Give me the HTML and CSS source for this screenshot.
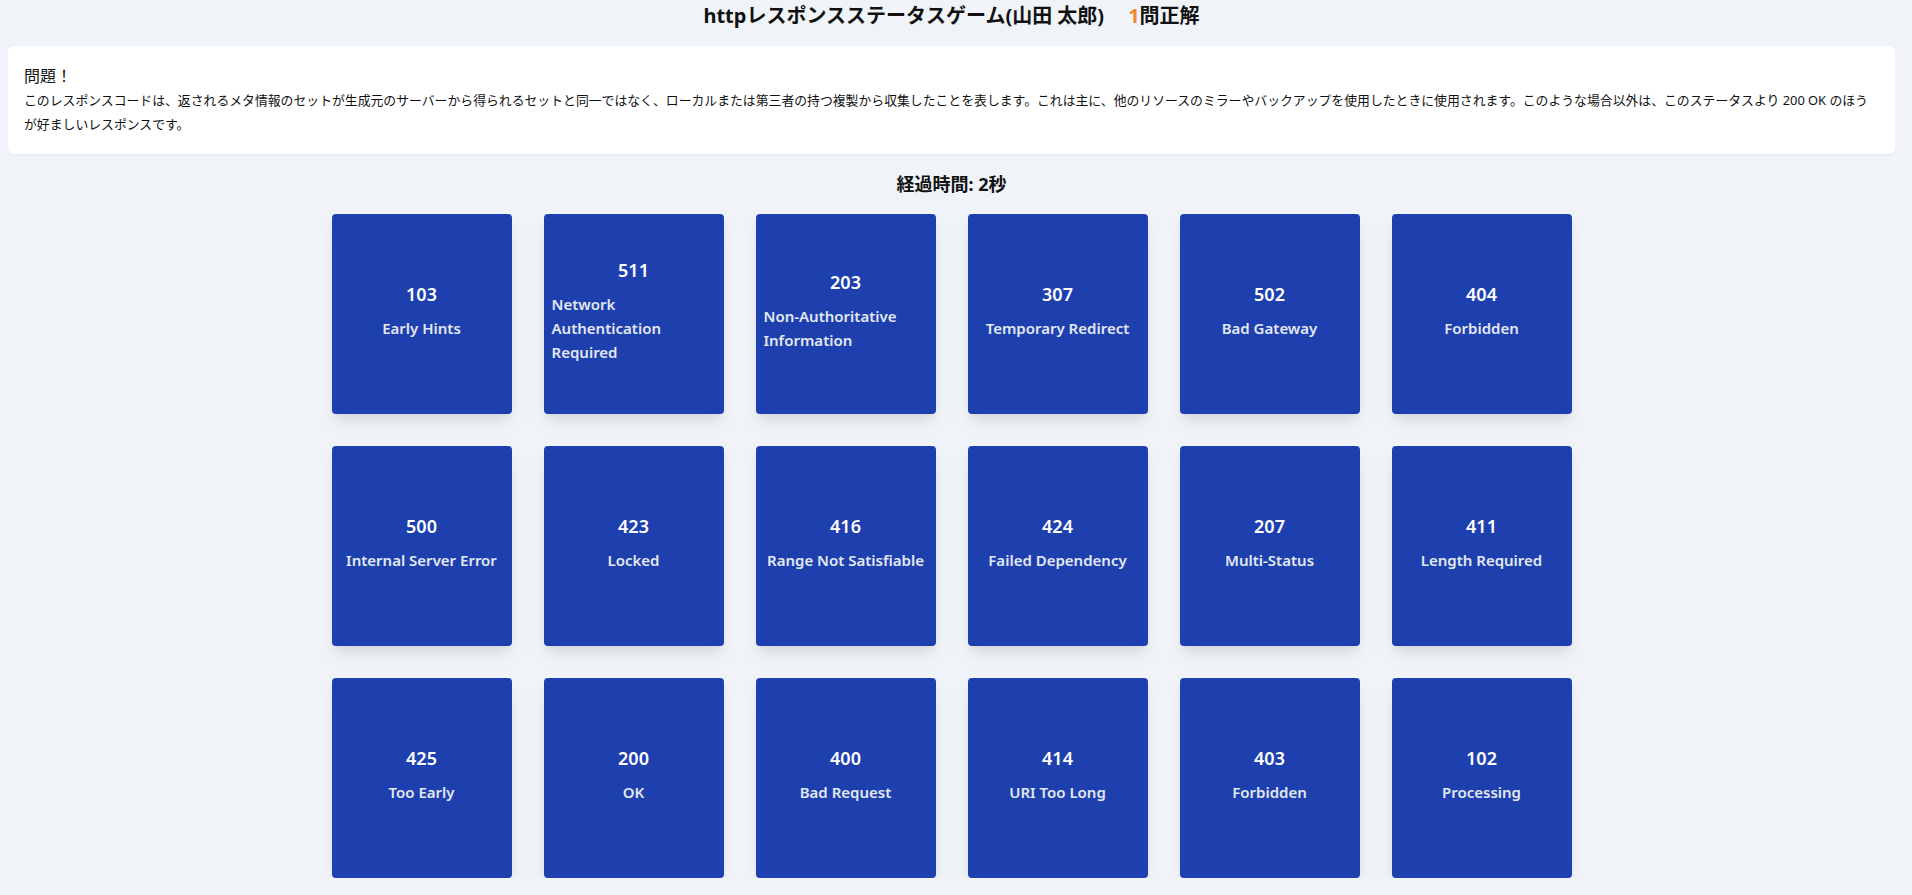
FILE: index.html
```html
<!DOCTYPE html>
<html lang="ja">
    <head>
        <meta charset="UTF-8">
        <title>httpレスポンスステータスゲーム</title>
        <link rel="stylesheet" href="styles.css">
    </head>
    <body>
        <h1 class="title">httpレスポンスステータスゲーム(山田 太郎)<span class="score"><span class="count">1</span>問正解</span></h1>

        <div class="question">
            <p class="question-head">問題！</p>
            <p class="question-text">このレスポンスコードは、返されるメタ情報のセットが生成元のサーバーから得られるセットと同一ではなく、ローカルまたは第三者の持つ複製から収集したことを表します。これは主に、他のリソースのミラーやバックアップを使用したときに使用されます。このような場合以外は、このステータスより 200 OK のほうが好ましいレスポンスです。</p>
        </div>

        <p class="timer">経過時間: 2秒</p>

        <div class="cards">
            <div class="card"><p class="code">103</p><p class="name">Early Hints</p></div>
            <div class="card"><p class="code">511</p><p class="name">Network Authentication Required</p></div>
            <div class="card"><p class="code">203</p><p class="name">Non-Authoritative Information</p></div>
            <div class="card"><p class="code">307</p><p class="name">Temporary Redirect</p></div>
            <div class="card"><p class="code">502</p><p class="name">Bad Gateway</p></div>
            <div class="card"><p class="code">404</p><p class="name">Forbidden</p></div>

            <div class="card"><p class="code">500</p><p class="name">Internal Server Error</p></div>
            <div class="card"><p class="code">423</p><p class="name">Locked</p></div>
            <div class="card"><p class="code">416</p><p class="name">Range Not Satisfiable</p></div>
            <div class="card"><p class="code">424</p><p class="name">Failed Dependency</p></div>
            <div class="card"><p class="code">207</p><p class="name">Multi-Status</p></div>
            <div class="card"><p class="code">411</p><p class="name">Length Required</p></div>

            <div class="card"><p class="code">425</p><p class="name">Too Early</p></div>
            <div class="card"><p class="code">200</p><p class="name">OK</p></div>
            <div class="card"><p class="code">400</p><p class="name">Bad Request</p></div>
            <div class="card"><p class="code">414</p><p class="name">URI Too Long</p></div>
            <div class="card"><p class="code">403</p><p class="name">Forbidden</p></div>
            <div class="card"><p class="code">102</p><p class="name">Processing</p></div>
        </div>
    </body>
</html>
```

FILE: styles.css
```css
* {
    box-sizing: border-box;
}
body {
    margin: 0 17px 0 8px;
    background-color: #f0f4f8;
    color: #111111;
    font-family: "Noto Sans", "Noto Sans CJK JP", sans-serif;
}
p {
    margin: 0;
}
.title {
    margin: 0 0 16px;
    padding-top: 2px;
    font-size: 20px;
    line-height: 28px;
    font-weight: bold;
    text-align: center;
}
.score {
    margin-left: 24px;
}
.count {
    color: #ed8936;
}
.question {
    background-color: #ffffff;
    border-radius: 6px;
    padding: 18px 16px;
    box-shadow: 0 1px 3px rgba(0, 0, 0, 0.06);
}
.question-head {
    font-size: 16px;
    line-height: 24px;
}
.question-text {
    font-size: 12.85px;
    line-height: 24px;
}
.timer {
    margin: 16px 0;
    font-size: 18px;
    line-height: 28px;
    font-weight: bold;
    text-align: center;
}
.cards {
    display: grid;
    grid-template-columns: repeat(6, 180px);
    grid-auto-rows: 200px;
    gap: 32px;
    justify-content: center;
}
.card {
    display: flex;
    flex-direction: column;
    align-items: center;
    justify-content: center;
    padding: 8px;
    background-color: #1e40af;
    border-radius: 4px;
    box-shadow: 0 10px 15px -3px rgba(0, 0, 0, 0.1), 0 4px 6px -2px rgba(0, 0, 0, 0.05);
}
.code {
    margin-bottom: 8px;
    color: #ffffff;
    font-size: 18px;
    line-height: 28px;
    font-weight: 600;
}
.name {
    margin-bottom: 8px;
    color: #e2e8f0;
    font-size: 15px;
    line-height: 24px;
    font-weight: 600;
}
```
